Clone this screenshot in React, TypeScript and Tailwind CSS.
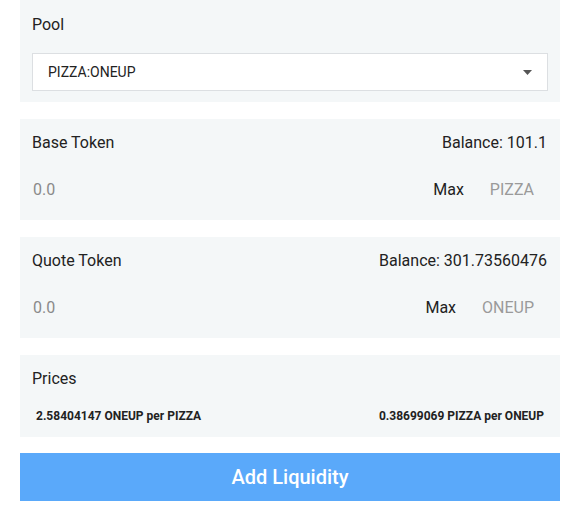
import React from 'react'

function TokenPanel({ label, balance, symbol }: { label: string; balance: string; symbol: string }) {
    return (
        <div className="h-[101px] bg-[#f4f7f8] px-3 pt-3 flex flex-col">
            <div className="flex justify-between items-center h-6 text-[16px] text-[#222]">
                <span>{label}</span>
                <span className="pr-[1px]">Balance: {balance}</span>
            </div>
            <div className="flex items-center h-10 mt-[15px] text-[16px]">
                <span className="pl-[1px] text-[#8a8a8a] flex-1">0.0</span>
                <span className="text-[#222]">Max</span>
                <span className="text-[#9a9a9a] ml-[26px] mr-[14px]">{symbol}</span>
            </div>
        </div>
    )
}

export default function App() {
    return (
        <div className="w-[582px] h-[507px] bg-white pl-5">
            <div className="w-[540px] flex flex-col gap-[17px] font-['Roboto',sans-serif]">
                <div className="h-[102px] bg-[#f4f7f8] px-3 pt-[13px] flex flex-col">
                    <span className="h-6 leading-6 text-[16px] text-[#222]">Pool</span>
                    <div className="mt-[16px] h-[38px] bg-white border border-[#dcdfe2] flex items-center pl-[15px] pr-[15px]">
                        <span className="flex-1 text-[14px] text-[#222]">PIZZA:ONEUP</span>
                        <svg width="9" height="5" viewBox="0 0 9 5">
                            <path d="M0 0 L9 0 L4.5 5 Z" fill="#555" />
                        </svg>
                    </div>
                </div>

                <TokenPanel label="Base Token" balance="101.1" symbol="PIZZA" />
                <TokenPanel label="Quote Token" balance="301.73560476" symbol="ONEUP" />

                <div className="h-[82px] bg-[#f4f7f8] px-3 pt-3 flex flex-col">
                    <span className="h-6 leading-6 text-[16px] text-[#222]">Prices</span>
                    <div className="flex justify-between items-center mt-[13px] h-6 px-1 text-[12px] font-bold text-[#222]">
                        <span>2.58404147 ONEUP per PIZZA</span>
                        <span>0.38699069 PIZZA per ONEUP</span>
                    </div>
                </div>

                <button className="h-12 -mt-[1px] bg-[#5aa9fa] text-white text-[20px] font-medium">
                    Add Liquidity
                </button>
            </div>
        </div>
    )
}
